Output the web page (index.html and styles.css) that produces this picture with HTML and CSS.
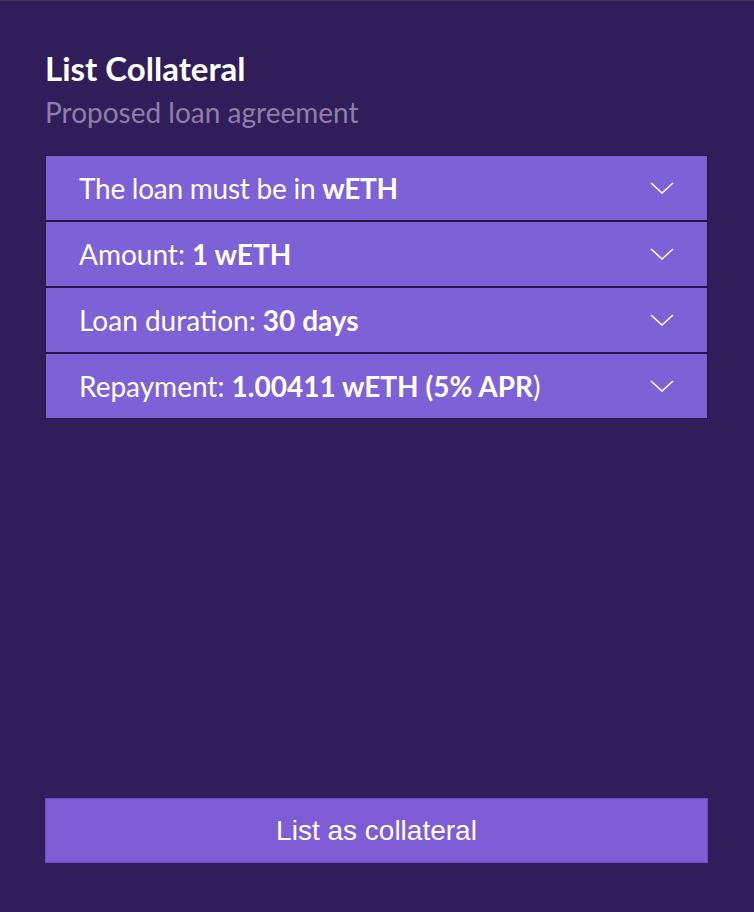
FILE: index.html
```html
<!DOCTYPE html>
<html lang="en">
<head>
    <meta charset="UTF-8">
    <meta name="viewport" content="width=device-width, initial-scale=1.0">
    <title>List Collateral</title>
    <link rel="stylesheet" href="styles.css">
</head>
<body>
    <div class="panel">
        <h1 class="title">List Collateral</h1>
        <p class="subtitle">Proposed loan agreement</p>

        <div class="terms">
            <div class="term">
                <span class="tight">The loan must be in <b>wETH</b></span>
                <svg class="chevron" viewBox="0 0 24 12"><path d="M1 1 L12 11 L23 1"/></svg>
            </div>
            <div class="term">
                <span>Amount: <b>1 wETH</b></span>
                <svg class="chevron" viewBox="0 0 24 12"><path d="M1 1 L12 11 L23 1"/></svg>
            </div>
            <div class="term">
                <span>Loan duration: <b>30 days</b></span>
                <svg class="chevron" viewBox="0 0 24 12"><path d="M1 1 L12 11 L23 1"/></svg>
            </div>
            <div class="term">
                <span>Repayment: <b>1.00411 wETH (5% APR</b>)</span>
                <svg class="chevron" viewBox="0 0 24 12"><path d="M1 1 L12 11 L23 1"/></svg>
            </div>
        </div>

        <button class="list-btn">List as collateral</button>
    </div>
</body>
</html>
```

FILE: styles.css
```css
body {
    margin: 0;
    background-color: #2f1e59;
    font-family: Lato, "Open Sans", sans-serif;
    color: #fff;
    border-top: 1px solid #3b3650;
}
.panel {
    box-sizing: border-box;
    min-height: 911px;
    padding: 48px 46px 49px 45px;
    display: flex;
    flex-direction: column;
}
.title {
    margin: 0;
    font-size: 33px;
    font-weight: 700;
    line-height: 38px;
}
.subtitle {
    margin: 8px 0 0;
    font-size: 28px;
    line-height: 34px;
    color: #8e7ea9;
}
.terms {
    margin-top: 26px;
}
.term {
    height: 64px;
    border: 1px solid #231844;
    background-color: #7c61d7;
    display: flex;
    align-items: center;
    justify-content: space-between;
    padding: 0 33px 0 33px;
    font-size: 28px;
}
.term .tight {
    letter-spacing: -0.25px;
}
.term b {
    font-weight: 700;
}
.chevron {
    width: 24px;
    height: 12px;
    fill: none;
    stroke: #fff;
    stroke-width: 1.6;
}
.list-btn {
    margin-top: auto;
    height: 65px;
    width: 100%;
    background-color: #7e5cd6;
    border: 1px solid #6a4bc3;
    color: #fff;
    font-family: "Liberation Sans", Arial, sans-serif;
    font-size: 28px;
    cursor: pointer;
}
```
